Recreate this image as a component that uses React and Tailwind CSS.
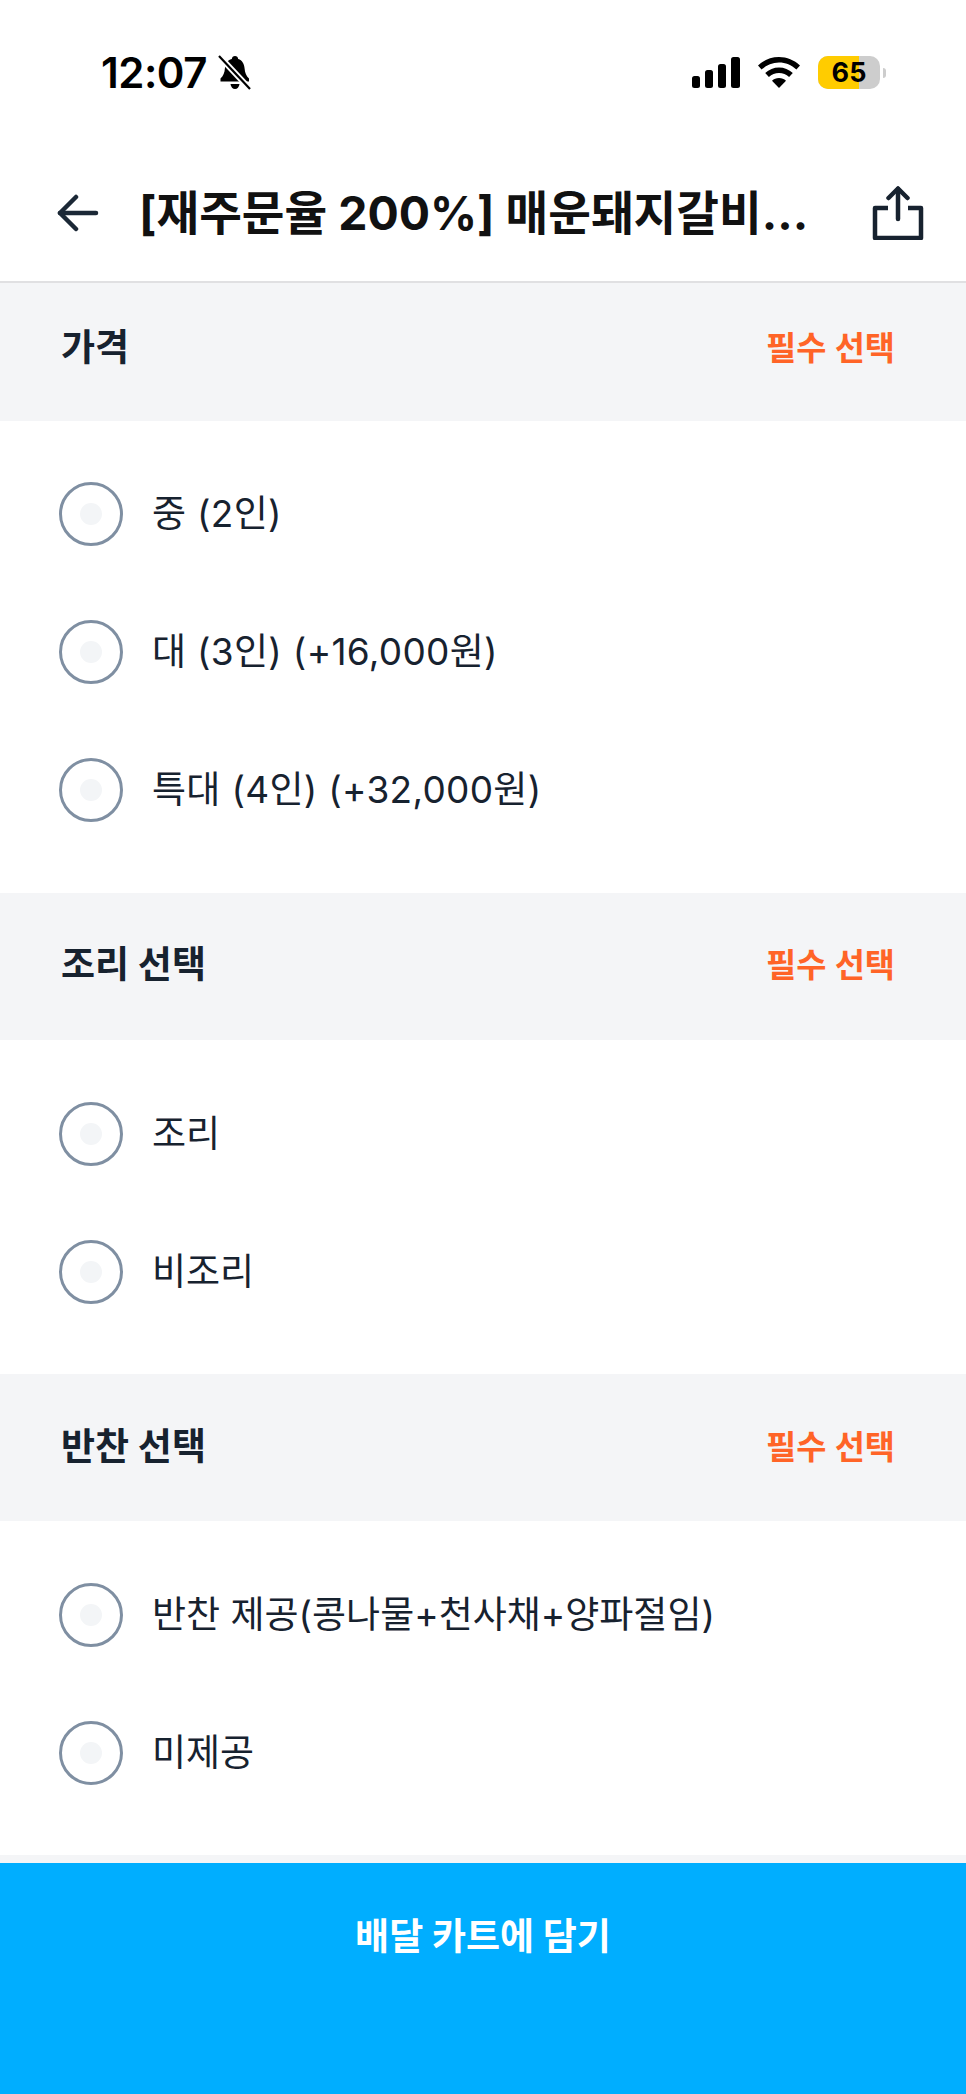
import React from "react";

const sections = [
  {
    title: "가격",
    headClass: "h-[138px] pb-[8px]",
    bodyClass: "pt-[24px] pb-[34px]",
    optionClass: "tracking-[0.3px]",
    options: ["중 (2인)", "대 (3인) (+16,000원)", "특대 (4인) (+32,000원)"],
  },
  {
    title: "조리 선택",
    headClass: "h-[147px] pb-[2px]",
    bodyClass: "pt-[25px] pb-[33px]",
    optionClass: "",
    options: ["조리", "비조리"],
  },
  {
    title: "반찬 선택",
    headClass: "h-[147px]",
    bodyClass: "pt-[25px] pb-[33px]",
    optionClass: "",
    options: ["반찬 제공(콩나물+천사채+양파절임)", "미제공"],
  },
];

const BellOff = () => (
  <svg width="33" height="36" viewBox="0 0 33 36" className="ml-[11px]">
    <path
      d="M17 1c1.800 0 3 1.200 3.200 3 4 1.300 6 4.700 6.400 9.500.3 4 1.600 7.500 4.400 10v3H2.500v-3c2.800-2.500 4.100-6 4.400-10C7.300 8.700 9.300 5.300 13.800 4 14 2.200 15.200 1 17 1z"
      fill="#000"
    />
    <path d="M12.500 29h9c-.4 3-2.200 5-4.500 5s-4.100-2-4.500-5z" fill="#000" />
    <path d="M1 1l31 33" stroke="#fff" strokeWidth="6" />
    <path d="M1 1l31 33" stroke="#000" strokeWidth="2.200" />
  </svg>
);

const Signal = () => (
  <svg width="48" height="31" viewBox="0 0 48 31" fill="#000">
    <rect x="0" y="19" width="8" height="12" rx="2.500" />
    <rect x="13" y="13" width="8" height="18" rx="2.500" />
    <rect x="26" y="7" width="8" height="24" rx="2.500" />
    <rect x="39" y="0" width="9" height="31" rx="2.500" />
  </svg>
);

const Wifi = () => (
  <svg width="42" height="31" viewBox="0 0 42 31" fill="#000">
    <path d="M21 0c8 0 15 3 21 8.500l-3.600 4C33.500 8 27.500 5.500 21 5.500S8.500 8 3.600 12.500L0 8.500C6 3 13 0 21 0z" />
    <path d="M21 10.500c5.200 0 10 2 13.800 5.500l-3.700 4C28.300 17.500 24.800 16 21 16s-7.300 1.500-10.100 4l-3.700-4c3.800-3.500 8.600-5.500 13.800-5.500z" />
    <path d="M21 21c2.700 0 5.200 1 7 2.800L21 31l-7-7.200c1.800-1.800 4.300-2.800 7-2.800z" />
  </svg>
);

const BackArrow = () => (
  <svg
    width="42"
    height="38"
    viewBox="0 0 42 38"
    fill="none"
    stroke="#1b2836"
    strokeWidth="4.500"
    strokeLinecap="round"
    strokeLinejoin="round"
    className="shrink-0"
  >
    <path d="M39 19H3" />
    <path d="M19 3L3 19l16 16" />
  </svg>
);

const Share = () => (
  <svg
    width="52"
    height="54"
    viewBox="0 0 52 54"
    fill="none"
    stroke="#17222f"
    strokeWidth="4.500"
    strokeLinecap="round"
    strokeLinejoin="round"
    className="shrink-0"
  >
    <path d="M26 33V3" />
    <path d="M16.500 12L26 2.500 35.500 12" />
    <path d="M16 22H3v30h46V22H36" strokeLinecap="butt" />
  </svg>
);

const Radio = () => (
  <span className="flex h-[64px] w-[64px] shrink-0 items-center justify-center rounded-full border-[3px] border-[#7f8fa2]">
    <span className="h-[22px] w-[22px] rounded-full bg-[#f3f5f7]" />
  </span>
);

const OptionRow = ({ label, className }) => (
  <div className="flex h-[138px] items-center pl-[59px]">
    <Radio />
    <span className={`ml-[29px] text-[37px] leading-tight text-[#17222f] ${className}`}>{label}</span>
  </div>
);

const App = () => {
  return (
    <div className="flex h-[2094px] w-[966px] flex-col overflow-hidden bg-white font-['Inter','Noto_Sans_CJK_KR',sans-serif]">
      {/* Status bar */}
      <div className="flex h-[145px] shrink-0 items-start justify-between pl-[101px] pr-[80px] pt-[54px]">
        <div className="flex items-center">
          <span className="text-[42px] font-semibold leading-[38px] tracking-[-0.5px] text-black">12:07</span>
          <BellOff />
        </div>
        <div className="flex items-center pt-[2px]">
          <Signal />
          <span className="ml-[18px]">
            <Wifi />
          </span>
          <div className="ml-[18px] flex items-center">
            <div className="relative h-[33px] w-[62px] overflow-hidden rounded-[10px] bg-[#cdcdcd]">
              <div className="h-full w-[41px] bg-[#ffcc00]" />
              <span className="absolute inset-0 flex items-center justify-center text-[27px] font-bold leading-none text-black">
                65
              </span>
            </div>
            <div className="ml-[3px] h-[10px] w-[3px] rounded-r-full bg-[#cdcdcd]" />
          </div>
        </div>
      </div>

      {/* Nav bar */}
      <div className="flex h-[138px] shrink-0 items-center border-b-2 border-[#e0e0e2] pl-[57px] pr-[42px]">
        <BackArrow />
        <h1 className="ml-[40px] flex-1 whitespace-nowrap text-[46.4px] font-bold leading-tight text-[#111111]">
          [재주문율 200%] 매운돼지갈비...
        </h1>
        <Share />
      </div>

      {/* Option groups */}
      <div className="flex-1">
        {sections.map((section) => (
          <section key={section.title}>
            <div
              className={`flex items-center justify-between bg-[#f4f5f7] pl-[61px] pr-[71px] ${section.headClass}`}
            >
              <h2 className="text-[37px] font-bold leading-tight text-[#17222f]">{section.title}</h2>
              <span className="text-[32.8px] font-semibold leading-tight text-[#ff6427]">필수 선택</span>
            </div>
            <div className={section.bodyClass}>
              {section.options.map((label) => (
                <OptionRow key={label} label={label} className={section.optionClass} />
              ))}
            </div>
          </section>
        ))}
        <div className="h-[8px] bg-[#f4f5f7]" />
      </div>

      {/* Bottom button */}
      <div className="flex h-[231px] shrink-0 justify-center bg-[#00aeff] pt-[52px]">
        <span className="text-[37px] font-bold leading-[44px] text-white">배달 카트에 담기</span>
      </div>
    </div>
  );
};

export default App;
